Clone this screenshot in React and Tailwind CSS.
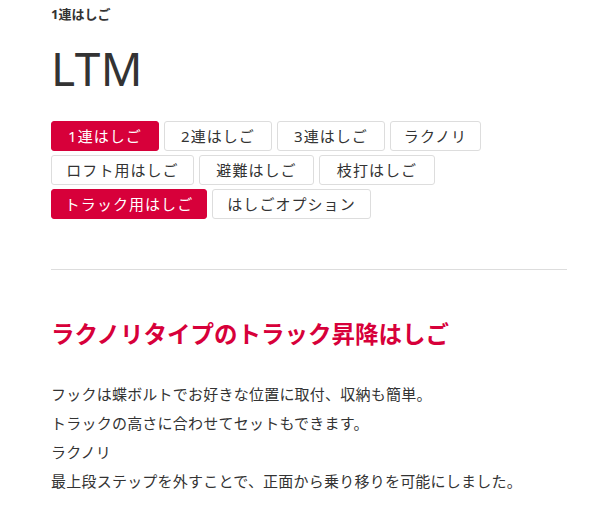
import React from "react";

const TABS = [
  { label: "1連はしご", w: "w-[108px]", active: true },
  { label: "2連はしご", w: "w-[108px]" },
  { label: "3連はしご", w: "w-[108px]" },
  { label: "ラクノリ", w: "w-[91px]" },
  { label: "ロフト用はしご", w: "w-[143px]" },
  { label: "避難はしご", w: "w-[115px]" },
  { label: "枝打はしご", w: "w-[116px]" },
  { label: "トラック用はしご", w: "w-[156px]", active: true },
  { label: "はしごオプション", w: "w-[159px]" },
];

const LINES = [
  "フックは蝶ボルトでお好きな位置に取付、収納も簡単。",
  "トラックの高さに合わせてセットもできます。",
  "ラクノリ",
  "最上段ステップを外すことで、正面から乗り移りを可能にしました。",
];

function Tab({ label, w, active }) {
  return (
    <button
      className={`${w} h-[30px] rounded-[3px] border text-[15px] tracking-[0.07em] leading-none whitespace-nowrap ${
        active ? "bg-[#d7003a] border-[#d7003a] text-white" : "bg-white border-[#dddddd] text-[#333333]"
      }`}
    >
      {label}
    </button>
  );
}

export default function App() {
  return (
    <div className="min-h-[520px] bg-white font-['Noto_Sans','Noto_Sans_CJK_JP',sans-serif] text-[#333333]">
      <div className="ml-[51px] w-[516px] pt-[5px]">
        <p className="text-[13px] font-bold leading-[18px]">1連はしご</p>
        <h1 className="mt-[17px] text-[46px] leading-[56px] tracking-[0.01em]">LTM</h1>

        <div className="mt-[25px] flex flex-wrap gap-x-[5px] gap-y-[4px]">
          {TABS.map((t) => (
            <Tab key={t.label} {...t} />
          ))}
        </div>

        <hr className="mt-[50px] border-0 border-t border-[#dddddd]" />

        <h2 className="mt-[47px] text-[23.5px] font-bold leading-[34px] text-[#d7003a]">
          ラクノリタイプのトラック昇降はしご
        </h2>

        <div className="mt-[29px] text-[15px] leading-[29px] tracking-[0.015em]">
          {LINES.map((l) => (
            <p key={l}>{l}</p>
          ))}
        </div>
      </div>
    </div>
  );
}
